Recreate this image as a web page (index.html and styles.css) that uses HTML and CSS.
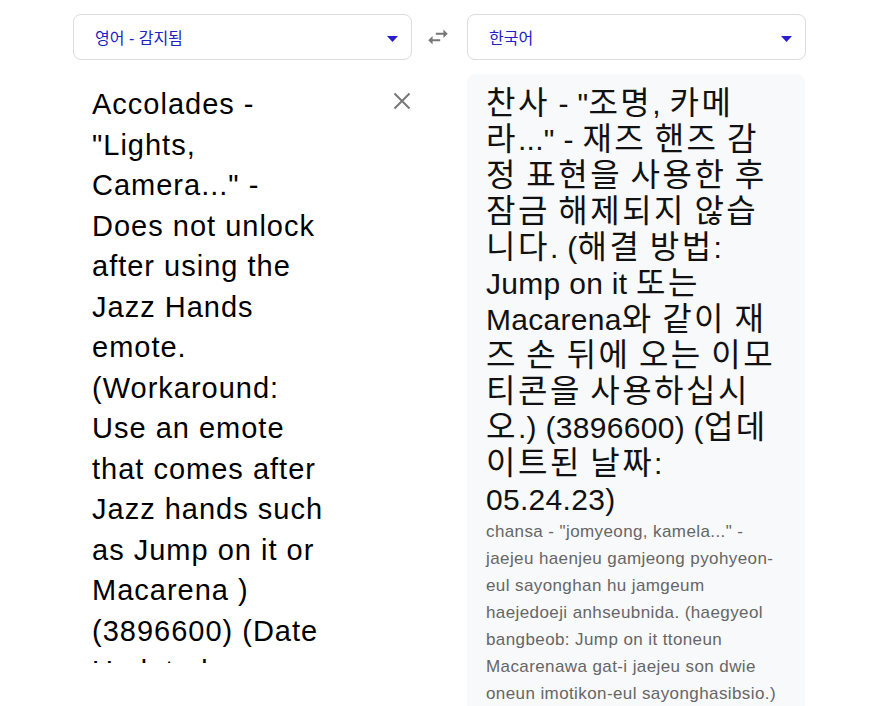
FILE: index.html
```html
<!DOCTYPE html>
<html lang="ko">
<head>
<meta charset="utf-8">
<title>번역</title>
<link rel="stylesheet" href="styles.css">
</head>
<body>
<div class="app">
  <div class="header">
    <div class="select">
      <span class="select-label">영어 - 감지됨</span>
      <svg class="caret" width="11" height="6" viewBox="0 0 11 6"><polygon points="0,0 11,0 5.5,6" fill="currentColor"/></svg>
    </div>
    <div class="swap">
      <svg width="26" height="26" viewBox="0 0 24 24"><path d="M6.99 11L3 15l3.99 4v-3H14v-2H6.99v-3zM21 9l-3.99-4v3H10v2h7.01v3L21 9z" fill="currentColor"/></svg>
    </div>
    <div class="select">
      <span class="select-label">한국어</span>
      <svg class="caret" width="11" height="6" viewBox="0 0 11 6"><polygon points="0,0 11,0 5.5,6" fill="currentColor"/></svg>
    </div>
  </div>
  <div class="panels">
    <div class="source">
      <div class="source-text">Accolades -<br>"Lights,<br>Camera..." -<br>Does not unlock<br>after using the<br>Jazz Hands<br>emote.<br>(Workaround:<br>Use an emote<br>that comes after<br>Jazz hands such<br>as Jump on it or<br>Macarena )<br>(3896600) (Date<br>Updated:<br>05.24.23)</div>
      <div class="clear">
        <svg width="18" height="18" viewBox="0 0 18 18"><path d="M1.5 1.5L16.5 16.5M16.5 1.5L1.5 16.5" stroke="currentColor" stroke-width="2" fill="none"/></svg>
      </div>
    </div>
    <div class="target">
      <div class="target-text"><span class="ko">찬사</span> - "<span class="ko">조명</span>, <span class="ko">카메</span><br><span class="ko">라</span>..." - <span class="ko">재즈 핸즈 감</span><br><span class="ko">정 표현을 사용한 후</span><br><span class="ko">잠금 해제되지 않습</span><br><span class="ko">니다</span>. (<span class="ko">해결 방법</span>:<br>Jump on it <span class="ko">또는</span><br>Macarena<span class="ko">와 같이 재</span><br><span class="ko">즈 손 뒤에 오는 이모</span><br><span class="ko">티콘을 사용하십시</span><br><span class="ko">오</span>.) (3896600) (<span class="ko">업데</span><br><span class="ko">이트된 날짜</span>:<br>05.24.23)</div>
      <div class="romanized">chansa - "jomyeong, kamela..." -<br>jaejeu haenjeu gamjeong pyohyeon-<br>eul sayonghan hu jamgeum<br>haejedoeji anhseubnida. (haegyeol<br>bangbeob: Jump on it ttoneun<br>Macarenawa gat-i jaejeu son dwie<br>oneun imotikon-eul sayonghasibsio.)<br>(3896600) (eobdeiteudoen naljja: 05.24.23)</div>
    </div>
  </div>
</div>
</body>
</html>
```
FILE: styles.css
```css
html, body {
  margin: 0;
  padding: 0;
  background: #ffffff;
  overflow: hidden;
  height: 706px;
}
body {
  font-family: "Liberation Sans", "Noto Sans CJK KR", sans-serif;
  color: #000;
}
.app {
  display: flex;
  flex-direction: column;
  padding: 14px 0 0 73px;
}
.header {
  display: flex;
  align-items: center;
}
.select {
  box-sizing: border-box;
  width: 339px;
  height: 46px;
  border: 1px solid #dcdcdc;
  border-radius: 8px;
  display: flex;
  align-items: center;
  justify-content: space-between;
  padding: 0 13px 0 21px;
  background: #fff;
}
.select-label {
  font-size: 16px;
  color: #2020c4;
}
.caret {
  color: #2a1ecb;
  display: block;
  margin-top: 3px;
}
.swap {
  width: 55px;
  display: flex;
  justify-content: center;
  color: #777;
  padding-right: 3px;
  box-sizing: border-box;
}
.swap svg {
  display: block;
}
.panels {
  display: flex;
  margin-top: 14px;
  gap: 55px;
}
.source {
  box-sizing: border-box;
  width: 339px;
  height: 589px;
  overflow: hidden;
  display: flex;
  padding: 10px 1px 0 19px;
}
.source-text {
  flex: 1;
  font-size: 29px;
  letter-spacing: 1px;
  line-height: 40.5px;
  white-space: nowrap;
  color: #000;
}
.clear {
  color: #777;
  margin-top: 8px;
}
.clear svg {
  display: block;
}
.target {
  box-sizing: border-box;
  width: 338px;
  height: 700px;
  background: #f8f9fa;
  border-radius: 8px 8px 0 0;
  padding: 12px 19px 0 19px;
}
.target-text {
  font-size: 30px;
  letter-spacing: 0.3px;
  line-height: 36px;
  white-space: nowrap;
  color: #111;
}
.ko {
  font-size: 32px;
  letter-spacing: 2.5px;
  word-spacing: -3px;
  line-height: 30px;
}
.romanized {
  font-size: 17px;
  letter-spacing: 0.4px;
  line-height: 27px;
  white-space: nowrap;
  color: #666;
}
```
